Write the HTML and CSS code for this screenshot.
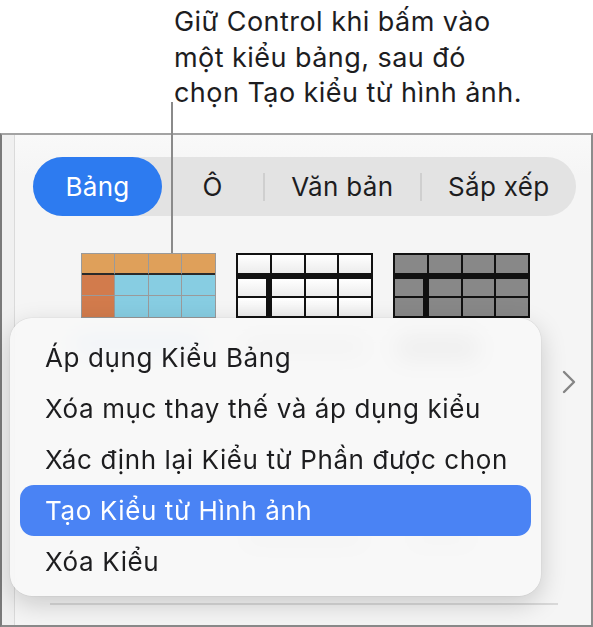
FILE: index.html
```html
<!DOCTYPE html>
<html lang="vi">
<head>
  <meta charset="UTF-8" />
  <meta name="viewport" content="width=device-width, initial-scale=1.0"/>
  <title>Kiểu bảng</title>
  <link rel="stylesheet" href="styles.css">
</head>
<body>
  <p class="callout">Giữ Control khi bấm vào<br>một kiểu bảng, sau đó<br>chọn Tạo kiểu từ hình ảnh.</p>
  <div class="leader"></div>

  <div class="panel">
    <div class="panel-inner">
      <div class="tabs">
        <div class="tab active">Bảng</div>
        <div class="tab">Ô</div>
        <div class="sep"></div>
        <div class="tab">Văn bản</div>
        <div class="sep"></div>
        <div class="tab">Sắp xếp</div>
      </div>

      <div class="styles">
        <div class="thumbs">
          <div class="tbl orange">
            <div class="row head"><span></span><span></span><span></span><span></span></div>
            <div class="row"><span></span><span></span><span></span><span></span></div>
            <div class="row"><span></span><span></span><span></span><span></span></div>
          </div>
          <div class="tbl plain">
            <div class="row head"><span></span><span></span><span></span><span></span></div>
            <div class="row"><span></span><span></span><span></span><span></span></div>
            <div class="row"><span></span><span></span><span></span><span></span></div>
          </div>
          <div class="tbl dark">
            <div class="row head"><span></span><span></span><span></span><span></span></div>
            <div class="row"><span></span><span></span><span></span><span></span></div>
            <div class="row"><span></span><span></span><span></span><span></span></div>
          </div>

          <div class="under">
            <div class="sel"></div>
            <div class="ghost-text"></div>
            <div class="ghost-pill"></div>
          </div>
          <div class="under low">
            <div></div>
            <div class="ghost-text"></div>
            <div class="ghost-small"></div>
          </div>
        </div>
        <svg class="chevron" width="14" height="24" viewBox="0 0 14 24">
          <path d="M2 2 L12 12 L2 22" fill="none" stroke="#858585" stroke-width="2.4" stroke-linecap="round" stroke-linejoin="round"/>
        </svg>
      </div>

      <div class="rule"></div>
    </div>
  </div>

  <ul class="menu">
    <li>Áp dụng Kiểu Bảng</li>
    <li>Xóa mục thay thế và áp dụng kiểu</li>
    <li>Xác định lại Kiểu từ Phần được chọn</li>
    <li class="hi">Tạo Kiểu từ Hình ảnh</li>
    <li>Xóa Kiểu</li>
  </ul>
</body>
</html>
```

FILE: styles.css
```css
body {
  margin: 0;
  width: 593px;
  height: 627px;
  overflow: hidden;
  background: white;
  font-family: Inter, "Noto Sans", sans-serif;
  color: #1d1d1f;
  position: relative;
}

.callout {
  margin: 0;
  padding: 4px 0 0 174px;
  height: 128px;
  box-sizing: border-box;
  font-size: 27px;
  line-height: 35.5px;
  letter-spacing: 0.45px;
}

.leader {
  position: absolute;
  left: 171px;
  top: 102px;
  width: 2px;
  height: 151px;
  background: #8a8a8a;
  z-index: 2;
}

.panel {
  margin-top: 5px;
  height: 494px;
  border: 2px solid #a3a3a3;
  border-left-color: #7a7a7a;
  border-right-color: #8c8c8c;
  border-bottom-color: #8a8a8a;
  box-sizing: border-box;
  background: #f0f0f0;
}

.panel-inner {
  margin-left: 12px;
  height: 100%;
  border-left: 1px solid #dadada;
  background: linear-gradient(#f9f9f9, #f5f5f5 40px);
  padding-top: 22px;
  box-sizing: border-box;
}

.tabs {
  margin-left: 18px;
  width: 543px;
  height: 59px;
  border-radius: 30px;
  background: #e3e3e3;
  display: flex;
  align-items: center;
  font-size: 26px;
  letter-spacing: 0.3px;
}

.tab {
  text-align: center;
  line-height: 59px;
  flex: 1;
}

.tab.active {
  flex: 0 0 129px;
  background: #2d7bf0;
  color: white;
  border-radius: 30px;
}

.tab:nth-child(2) {
  flex: 0 0 101px;
}

.sep {
  width: 2px;
  height: 28px;
  background: #cfcfcf;
}

.styles {
  display: flex;
  align-items: center;
  margin-top: 37px;
  height: 252px;
}

.thumbs {
  display: grid;
  grid-template-columns: 135px 137px 137px;
  column-gap: 20px;
  row-gap: 14px;
  margin-left: 66px;
  align-self: flex-start;
}

.tbl {
  height: 65px;
  display: flex;
  flex-direction: column;
  box-sizing: border-box;
}

.row {
  flex: 1;
  display: grid;
  grid-template-columns: 1fr 1fr 1fr 1fr;
}

.orange {
  border: 1px solid #9a9a9a;
}

.orange span {
  border-right: 1px solid #9a9a9a;
  border-bottom: 1px solid #9a9a9a;
  background: #87cde2;
}

.orange span:last-child {
  border-right: none;
}

.orange .row:last-child span {
  border-bottom: none;
}

.orange .head span {
  background: #dfa05a;
  border-bottom: 2px solid #2a2a2a;
}

.orange .row span:first-child {
  background: #d27b4c;
}

.orange .head span:first-child {
  background: #dfa05a;
}

.plain,
.dark {
  border: 2px solid #111;
  background: #111;
  gap: 2px;
}

.plain .row,
.dark .row {
  gap: 2px;
}

.plain .head,
.dark .head {
  margin-bottom: 4px;
}

.plain .row:not(.head) span:first-child,
.dark .row:not(.head) span:first-child {
  margin-right: 4px;
}

.plain span {
  background: linear-gradient(#ffffff, #ececec);
}

.dark span {
  background: #888888;
}

.under {
  grid-column: 1 / 4;
  display: grid;
  grid-template-columns: 135px 137px 137px;
  column-gap: 20px;
  height: 30px;
}

.sel {
  margin: 4px 0 10px -6px;
  width: 125px;
  background: #bcd7f3;
  border-radius: 6px;
}

.ghost-text {
  margin: 6px 10px;
  background: #d6d6d6;
  border-radius: 4px;
}

.ghost-pill {
  margin: 2px 50px 0 2px;
  background: #bdbdbd;
  border-radius: 14px;
}

.under.low {
  margin-top: 150px;
  height: 24px;
}

.ghost-small {
  margin: 6px 60px 6px 20px;
  background: #dcdcdc;
}

.chevron {
  margin: 6px 0 0 32px;
}

.rule {
  margin: 98px 0 0 35px;
  width: 508px;
  height: 2px;
  background: #d9d9d9;
}

.menu {
  position: absolute;
  left: 10px;
  top: 318px;
  width: 531px;
  height: 278px;
  margin: 0;
  padding: 14px 10px 10px;
  box-sizing: border-box;
  list-style: none;
  border-radius: 22px;
  background: rgba(248, 248, 248, 0.86);
  backdrop-filter: blur(10px);
  box-shadow: 0 0 1px rgba(0, 0, 0, 0.3), 0 8px 26px rgba(0, 0, 0, 0.18);
  z-index: 3;
  font-size: 26px;
  letter-spacing: 0.6px;
}

.menu li {
  height: 51px;
  line-height: 51px;
  padding-left: 25px;
  border-radius: 14px;
}

.menu li.hi {
  background: #4a83f4;
  color: white;
}
```
